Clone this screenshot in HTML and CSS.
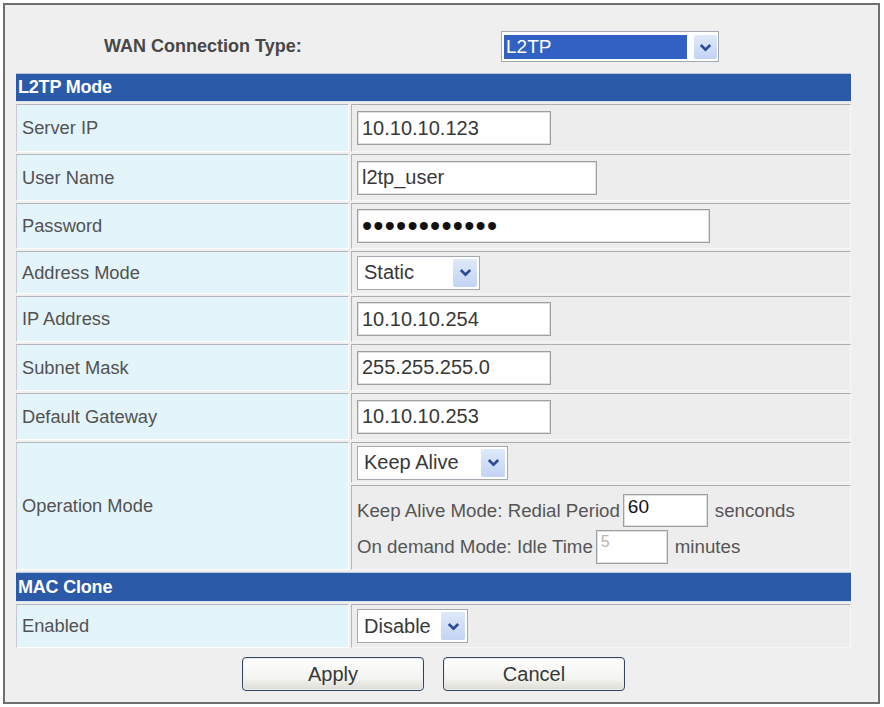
FILE: index.html
```html
<!DOCTYPE html>
<html lang="en">
<head>
<meta charset="utf-8">
<title>WAN Settings - L2TP</title>
<link rel="stylesheet" href="styles.css">
</head>
<body>
<div class="frame">
  <form class="panel">
    <div class="wan-row">
      <span class="wan-label">WAN Connection Type:</span>
      <div class="select select-wan">
        <span class="select-value is-selected">L2TP</span>
        <span class="select-arrow"><svg width="13" height="9" viewBox="0 0 13 9"><path d="M1.8 2 L6.5 6.6 L11.2 2" fill="none" stroke="#2b4c92" stroke-width="2.6"/></svg></span>
      </div>
    </div>

    <div class="grid">
      <div class="section">L2TP Mode</div>

      <div class="label row-48">Server IP</div>
      <div class="value row-48"><input class="field w-194" type="text" value="10.10.10.123"></div>

      <div class="label row-47">User Name</div>
      <div class="value row-47"><input class="field w-240" type="text" value="l2tp_user"></div>

      <div class="label row-46">Password</div>
      <div class="value row-46"><input class="field field-password w-353" type="password" value="l2tppassword"></div>

      <div class="label row-43">Address Mode</div>
      <div class="value row-43">
        <div class="select w-123">
          <span class="select-value">Static</span>
          <span class="select-arrow"><svg width="13" height="9" viewBox="0 0 13 9"><path d="M1.8 2 L6.5 6.6 L11.2 2" fill="none" stroke="#2b4c92" stroke-width="2.6"/></svg></span>
        </div>
      </div>

      <div class="label row-46">IP Address</div>
      <div class="value row-46"><input class="field w-194" type="text" value="10.10.10.254"></div>

      <div class="label row-47">Subnet Mask</div>
      <div class="value row-47"><input class="field w-194" type="text" value="255.255.255.0"></div>

      <div class="label row-47">Default Gateway</div>
      <div class="value row-47"><input class="field w-194" type="text" value="10.10.10.253"></div>

      <div class="label label-span">Operation Mode</div>
      <div class="value row-41">
        <div class="select w-151">
          <span class="select-value">Keep Alive</span>
          <span class="select-arrow"><svg width="13" height="9" viewBox="0 0 13 9"><path d="M1.8 2 L6.5 6.6 L11.2 2" fill="none" stroke="#2b4c92" stroke-width="2.6"/></svg></span>
        </div>
      </div>
      <div class="value value-details row-85">
        <div class="detail-line">
          <span>Keep Alive Mode: Redial Period</span>
          <input class="field field-small w-85" type="text" value="60">
          <span class="unit">senconds</span>
        </div>
        <div class="detail-line">
          <span>On demand Mode: Idle Time</span>
          <input class="field field-small field-off w-72" type="text" value="5" disabled>
          <span class="unit">minutes</span>
        </div>
      </div>

      <div class="section section-mac">MAC Clone</div>

      <div class="label row-44">Enabled</div>
      <div class="value row-44">
        <div class="select w-111">
          <span class="select-value">Disable</span>
          <span class="select-arrow"><svg width="13" height="9" viewBox="0 0 13 9"><path d="M1.8 2 L6.5 6.6 L11.2 2" fill="none" stroke="#2b4c92" stroke-width="2.6"/></svg></span>
        </div>
      </div>
    </div>

    <div class="actions">
      <button class="btn" type="button">Apply</button>
      <button class="btn" type="button">Cancel</button>
    </div>
  </form>
</div>
</body>
</html>
```
FILE: styles.css
```css
html, body {
  margin: 0;
  padding: 0;
  background: #ffffff;
}

body {
  font-family: "Liberation Sans", Arial, sans-serif;
  color: #4f4f4f;
}

/* outer settings frame */
.frame {
  box-sizing: border-box;
  width: 877px;
  height: 701px;
  margin: 3px 0 0 3px;
  border: 2px solid #6e6e6e;
  background: #efefef;
  padding-top: 17px;
}

.panel {
  width: 835px;
  margin: 0 0 0 11px;
}

/* connection type line */
.wan-row {
  display: flex;
  align-items: center;
  height: 49px;
  margin-bottom: 2px;
}

.wan-label {
  box-sizing: border-box;
  width: 485px;
  padding-left: 88px;
  font-size: 18px;
  font-weight: bold;
  color: #474747;
}

/* table grid */
.grid {
  display: grid;
  grid-template-columns: 333px 500px;
  column-gap: 2px;
  row-gap: 2px;
}

.section {
  grid-column: 1 / -1;
  box-sizing: border-box;
  height: 29px;
  display: flex;
  align-items: center;
  padding-left: 2px;
  background: #2b5ba8;
  border-top: 1px solid #b9c8de;
  border-bottom: 1px solid #d8e2ef;
  color: #ffffff;
  font-size: 18px;
  font-weight: bold;
  letter-spacing: -0.2px;
}

.section-mac {
  height: 30px;
}

.label,
.value {
  box-sizing: border-box;
  display: flex;
  align-items: center;
  border-style: solid;
  border-width: 1px;
}

.label {
  background: #e4f4fb;
  border-color: #b3b7ba #fdfdfd #fdfdfd #c6cacc;
  padding-left: 5px;
  font-size: 18.3px;
  color: #525252;
}

.value {
  background: #ededed;
  border-color: #adadad #f7f7f7 #f7f7f7 #b5b5b5;
  padding-left: 5px;
}

.label-span {
  grid-row: span 2;
}

.row-41 { height: 41px; }
.row-43 { height: 43px; }
.row-44 { height: 44px; }
.row-46 { height: 46px; }
.row-47 { height: 47px; }
.row-48 { height: 48px; }
.row-85 { height: 85px; }

.value-details {
  flex-direction: column;
  align-items: flex-start;
  justify-content: center;
  gap: 2px;
  padding-top: 2px;
}

.detail-line {
  display: flex;
  align-items: center;
  height: 34px;
  font-size: 18.7px;
  color: #555;
}

.detail-line .field {
  margin-left: 3px;
}

.detail-line .unit {
  margin-left: 7px;
}

/* text boxes */
.field {
  box-sizing: border-box;
  height: 34px;
  margin: 0;
  padding: 0 4px;
  border: 1px solid #9aa0a6;
  box-shadow: inset 0 0 0 1px #e0e0e0;
  background: #ffffff;
  font-family: "Liberation Sans", Arial, sans-serif;
  font-size: 20px;
  color: #383838;
  outline: none;
}

.field-password {
  font-size: 29px;
  letter-spacing: 1.2px;
  color: #111;
}

.field-small {
  height: 33px;
  padding-top: 0;
  padding-bottom: 8px;
  font-size: 19px;
  color: #111;
}

.field-off {
  height: 34px;
  font-size: 16px;
  color: #b4b4b4;
  background: #ffffff;
  padding-bottom: 10px;
}

.w-72 { width: 72px; }
.w-85 { width: 85px; }
.w-111 { width: 111px; }
.w-123 { width: 123px; }
.w-151 { width: 151px; }
.w-194 { width: 194px; }
.w-240 { width: 240px; }
.w-353 { width: 353px; }

/* drop-down boxes */
.select {
  box-sizing: border-box;
  display: flex;
  align-items: stretch;
  height: 34px;
  padding: 2px;
  border: 1px solid #a3a9b0;
  background: #ffffff;
}

.select-value {
  flex: 1;
  display: flex;
  align-items: center;
  padding-left: 4px;
  font-size: 20px;
  color: #383838;
  white-space: nowrap;
}

.select-arrow {
  width: 24px;
  display: flex;
  align-items: center;
  justify-content: center;
  border-radius: 2px;
  background: linear-gradient(#dfe9fb, #c2d3f3);
}

.select-wan {
  width: 218px;
  height: 31px;
  padding: 3px 1px 2px 2px;
}

.select-wan .select-value {
  flex: 0 0 181px;
  margin-right: 7px;
  padding-left: 2px;
  background: #3162c3;
  color: #ffffff;
  font-size: 19px;
}

/* form buttons */
.actions {
  display: flex;
  justify-content: center;
  gap: 19px;
  margin-top: 9px;
}

.btn {
  box-sizing: border-box;
  width: 182px;
  height: 34px;
  border: 1px solid #34465c;
  border-radius: 4px;
  box-shadow: inset 0 0 0 1px #e9eef4;
  background: linear-gradient(#ffffff, #f3f3ef 65%, #dddcd5);
  font-family: "Liberation Sans", Arial, sans-serif;
  font-size: 20px;
  color: #383838;
  padding: 0;
}
```
